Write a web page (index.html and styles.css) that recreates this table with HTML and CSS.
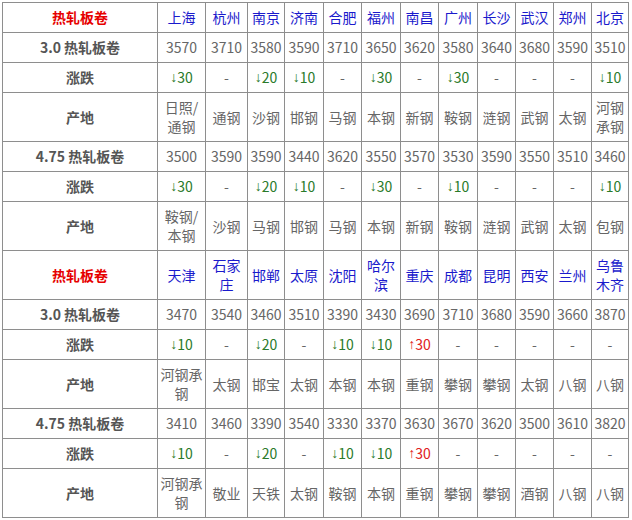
FILE: index.html
```html
<!DOCTYPE html>
<html lang="zh-CN">
<head>
<meta charset="utf-8">
<title>热轧板卷</title>
<link rel="stylesheet" href="styles.css">
</head>
<body>
<div class="wrap">
<table class="price">
<colgroup>
<col class="c-lbl"><col class="c-w48"><col class="c-w42"><col class="c-w37"><col class="c-w39"><col class="c-w38"><col class="c-w39"><col class="c-w38"><col class="c-w39"><col class="c-w38"><col class="c-w38"><col class="c-w38"><col class="c-w37">
</colgroup>
<tbody>
<tr><td class="hd">热轧板卷</td><td class="city">上海</td><td class="city">杭州</td><td class="city">南京</td><td class="city">济南</td><td class="city">合肥</td><td class="city">福州</td><td class="city">南昌</td><td class="city">广州</td><td class="city">长沙</td><td class="city">武汉</td><td class="city">郑州</td><td class="city">北京</td></tr>
<tr><td class="lbl">3.0 热轧板卷</td><td>3570</td><td>3710</td><td>3580</td><td>3590</td><td>3710</td><td>3650</td><td>3620</td><td>3580</td><td>3640</td><td>3680</td><td>3590</td><td>3510</td></tr>
<tr><td class="lbl">涨跌</td><td class="dn"><span class="ar">↓</span>30</td><td>-</td><td class="dn"><span class="ar">↓</span>20</td><td class="dn"><span class="ar">↓</span>10</td><td>-</td><td class="dn"><span class="ar">↓</span>30</td><td>-</td><td class="dn"><span class="ar">↓</span>30</td><td>-</td><td>-</td><td>-</td><td class="dn"><span class="ar">↓</span>10</td></tr>
<tr><td class="lbl">产地</td><td>日照/通钢</td><td>通钢</td><td>沙钢</td><td>邯钢</td><td>马钢</td><td>本钢</td><td>新钢</td><td>鞍钢</td><td>涟钢</td><td>武钢</td><td>太钢</td><td>河钢承钢</td></tr>
<tr><td class="lbl">4.75 热轧板卷</td><td>3500</td><td>3590</td><td>3590</td><td>3440</td><td>3620</td><td>3550</td><td>3570</td><td>3530</td><td>3590</td><td>3550</td><td>3510</td><td>3460</td></tr>
<tr><td class="lbl">涨跌</td><td class="dn"><span class="ar">↓</span>30</td><td>-</td><td class="dn"><span class="ar">↓</span>20</td><td class="dn"><span class="ar">↓</span>10</td><td>-</td><td class="dn"><span class="ar">↓</span>30</td><td>-</td><td class="dn"><span class="ar">↓</span>10</td><td>-</td><td>-</td><td>-</td><td class="dn"><span class="ar">↓</span>10</td></tr>
<tr><td class="lbl">产地</td><td>鞍钢/本钢</td><td>沙钢</td><td>马钢</td><td>邯钢</td><td>马钢</td><td>本钢</td><td>新钢</td><td>鞍钢</td><td>涟钢</td><td>武钢</td><td>太钢</td><td>包钢</td></tr>
<tr><td class="hd">热轧板卷</td><td class="city">天津</td><td class="city">石家庄</td><td class="city">邯郸</td><td class="city">太原</td><td class="city">沈阳</td><td class="city">哈尔滨</td><td class="city">重庆</td><td class="city">成都</td><td class="city">昆明</td><td class="city">西安</td><td class="city">兰州</td><td class="city">乌鲁木齐</td></tr>
<tr><td class="lbl">3.0 热轧板卷</td><td>3470</td><td>3540</td><td>3460</td><td>3510</td><td>3390</td><td>3430</td><td>3690</td><td>3710</td><td>3680</td><td>3590</td><td>3660</td><td>3870</td></tr>
<tr><td class="lbl">涨跌</td><td class="dn"><span class="ar">↓</span>10</td><td>-</td><td class="dn"><span class="ar">↓</span>20</td><td>-</td><td class="dn"><span class="ar">↓</span>10</td><td class="dn"><span class="ar">↓</span>10</td><td class="up"><span class="ar">↑</span>30</td><td>-</td><td>-</td><td>-</td><td>-</td><td>-</td></tr>
<tr><td class="lbl">产地</td><td>河钢承钢</td><td>太钢</td><td>邯宝</td><td>太钢</td><td>本钢</td><td>本钢</td><td>重钢</td><td>攀钢</td><td>攀钢</td><td>太钢</td><td>八钢</td><td>八钢</td></tr>
<tr><td class="lbl">4.75 热轧板卷</td><td>3410</td><td>3460</td><td>3390</td><td>3540</td><td>3330</td><td>3370</td><td>3630</td><td>3670</td><td>3620</td><td>3500</td><td>3610</td><td>3820</td></tr>
<tr><td class="lbl">涨跌</td><td class="dn"><span class="ar">↓</span>10</td><td>-</td><td class="dn"><span class="ar">↓</span>20</td><td>-</td><td class="dn"><span class="ar">↓</span>10</td><td class="dn"><span class="ar">↓</span>10</td><td class="up"><span class="ar">↑</span>30</td><td>-</td><td>-</td><td>-</td><td>-</td><td>-</td></tr>
<tr><td class="lbl">产地</td><td>河钢承钢</td><td>敬业</td><td>天铁</td><td>太钢</td><td>鞍钢</td><td>本钢</td><td>重钢</td><td>攀钢</td><td>攀钢</td><td>酒钢</td><td>八钢</td><td>八钢</td></tr>
</tbody>
</table>
</div>
</body>
</html>
```
FILE: styles.css
```css
html, body {
  margin: 0;
  padding: 0;
  background: #ffffff;
}
.wrap {
  padding: 2px;
}
.price {
  border-collapse: collapse;
  table-layout: fixed;
  width: 627px;
  font-family: "Noto Sans CJK SC", "Noto Sans", sans-serif;
  font-size: 14px;
  color: #666666;
}
.c-lbl { width: 155px; }
.c-w48 { width: 48px; }
.c-w42 { width: 42px; }
.c-w39 { width: 39px; }
.c-w38 { width: 38px; }
.c-w37 { width: 37px; }
.price td {
  border: 1px solid #8e8e8e;
  padding: 5px 1px;
  line-height: 19px;
  height: 19px;
  text-align: center;
  vertical-align: middle;
  word-break: break-all;
}
.price td.hd {
  color: #e60000;
  font-weight: bold;
}
.price td.city {
  color: #1a1acc;
}
.price td.lbl {
  color: #555555;
  font-weight: bold;
}
.price td.dn {
  color: #2a7a2a;
}
.price td.up {
  color: #e02020;
}
.ar {
  display: inline-block;
  font-family: "Liberation Sans", sans-serif;
  line-height: 19px;
  height: 19px;
  vertical-align: top;
}
```
